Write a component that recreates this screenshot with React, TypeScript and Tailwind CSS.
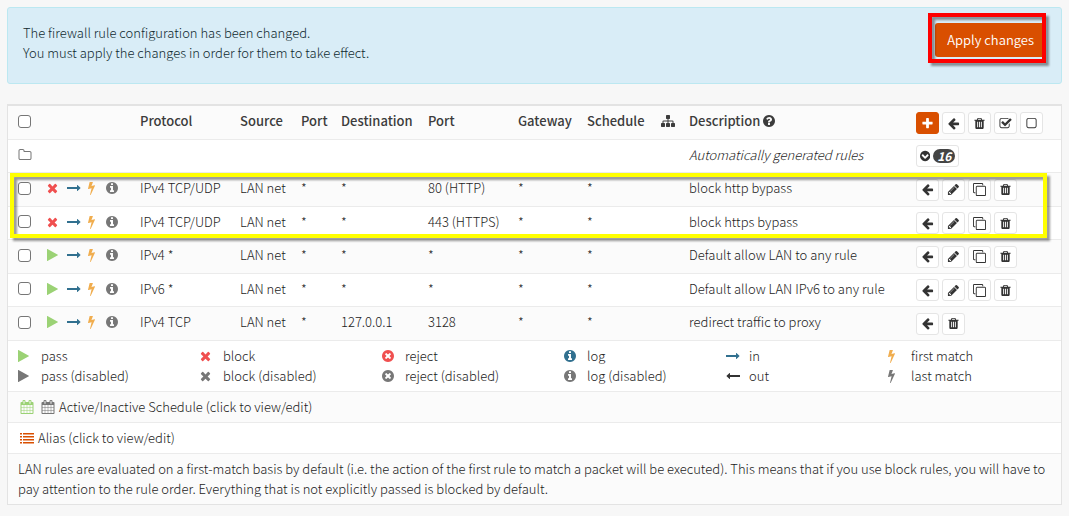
import type { ReactNode } from "react";

const DISC =
  "209-103 385.5t-279.5 279.5-385.5 103-385.5-103-279.5-279.5-103-385.5 103-385.5 279.5-279.5 385.5-103 385.5 103 279.5 279.5 103 385.5z";

const paths = {
  times:
    "M1490 1322q0 40-28 68l-136 136q-28 28-68 28t-68-28l-294-294-294 294q-28 28-68 28t-68-28l-136-136q-28-28-28-68t28-68l294-294-294-294q-28-28-28-68t28-68l136-136q28-28 68-28t68 28l294 294 294-294q28-28 68-28t68 28l136 136q28 28 28 68t-28 68l-294 294 294 294q28 28 28 68z",
  play: "M1576 927l-1328 738q-23 13-39.5 3t-16.5-36v-1472q0-26 16.5-36t39.5 3l1328 738q23 13 23 31t-23 31z",
  right:
    "M1728 893q0 14-10 24l-384 354q-16 14-35 6-19-9-19-29v-224h-1248q-14 0-23-9t-9-23v-192q0-14 9-23t23-9h1248v-224q0-21 19-29t35 5l384 350q10 10 10 23z",
  left: "M1792 800v192q0 14-9 23t-23 9h-1248v224q0 21-19 29t-35-5l-384-350q-10-10-10-23 0-14 10-24l384-354q16-14 35-6 19 9 19 29v224h1248q14 0 23 9t9 23z",
  bolt: "M1333 566q18 20 7 44l-540 1157q-13 25-42 25-4 0-14-2-17-5-25.5-19t-4.5-30l197-808-406 101q-4 1-12 1-18 0-31-11-18-15-13-39l201-825q4-14 16-23t28-9h328q19 0 32 12.5t13 29.5q0 8-5 18l-171 463 396-98q8-2 12-2 19 0 34 15z",
  info:
    "M1152 1376v-160q0-14-9-23t-23-9h-96v-512q0-14-9-23t-23-9h-320q-14 0-23 9t-9 23v160q0 14 9 23t23 9h96v320h-96q-14 0-23 9t-9 23v160q0 14 9 23t23 9h448q14 0 23-9t9-23zm-128-896v-160q0-14-9-23t-23-9h-192q-14 0-23 9t-9 23v160q0 14 9 23t23 9h192q14 0 23-9t9-23zm640 416q0 " +
    DISC,
  question:
    "M1024 1376v-192q0-14-9-23t-23-9h-192q-14 0-23 9t-9 23v192q0 14 9 23t23 9h192q14 0 23-9t9-23zm256-672q0-88-55.5-163t-138.5-116-170-41q-243 0-371 213-15 24 8 42l132 100q7 6 19 6 16 0 25-12 53-68 86-92 34-24 86-24 48 0 85.5 26t37.5 59q0 38-20 61t-68 45q-63 28-115.5 86.5t-52.5 125.5v36q0 14 9 23t23 9h192q14 0 23-9t9-23q0-19 21.5-49.5t54.5-49.5q32-18 49-28.5t46-35 44.5-48 28-60.5 12.5-81zm384 192q0 " +
    DISC,
  reject:
    "M1277 1122q0-26-19-45l-181-181 181-181q19-19 19-45 0-27-19-46l-90-90q-19-19-46-19-26 0-45 19l-181 181-181-181q-19-19-45-19-27 0-46 19l-90 90q-19 19-19 46 0 26 19 45l181 181-181 181q-19 19-19 45 0 27 19 46l90 90q19 19 46 19 26 0 45-19l181-181 181 181q19 19 45 19 27 0 46-19l90-90q19-19 19-46zm387-226q0 " +
    DISC,
  chevron:
    "M941 1299l454-454q19-19 19-45t-19-45l-102-102q-19-19-45-19t-45 19l-307 307-307-307q-19-19-45-19t-45 19l-102 102q-19 19-19 45t19 45l454 454q19 19 45 19t45-19zM1664 896q0 " +
    DISC,
  folder:
    "M1600 1312v-704q0-40-28-68t-68-28h-704q-40 0-68-28t-28-68v-64q0-40-28-68t-68-28h-320q-40 0-68 28t-28 68v960q0 40 28 68t68 28h1216q40 0 68-28t28-68zm128-704v704q0 92-66 158t-158 66h-1216q-92 0-158-66t-66-158v-960q0-92 66-158t158-66h320q92 0 158 66t66 158v32h672q92 0 158 66t66 158z",
  plus: "M1600 736v192q0 40-28 68t-68 28h-416v416q0 40-28 68t-68 28h-192q-40 0-68-28t-28-68v-416h-416q-40 0-68-28t-28-68v-192q0-40 28-68t68-28h416v-416q0-40 28-68t68-28h192q40 0 68 28t28 68v416h416q40 0 68 28t28 68z",
  arrow:
    "M1664 896v128q0 53-32.5 90.5t-84.5 37.5h-704l293 294q38 36 38 90t-38 90l-75 76q-37 37-90 37-52 0-91-37l-651-652q-37-37-37-90 0-52 37-91l651-650q38-38 91-38 52 0 90 38l75 74q38 38 38 91t-38 91l-293 293h704q52 0 84.5 37.5t32.5 90.5z",
  trash:
    "M704 1376v-704q0-14-9-23t-23-9h-64q-14 0-23 9t-9 23v704q0 14 9 23t23 9h64q14 0 23-9t9-23zm256 0v-704q0-14-9-23t-23-9h-64q-14 0-23 9t-9 23v704q0 14 9 23t23 9h64q14 0 23-9t9-23zm256 0v-704q0-14-9-23t-23-9h-64q-14 0-23 9t-9 23v704q0 14 9 23t23 9h64q14 0 23-9t9-23zm-544-992h448l-48-117q-7-9-17-11h-317q-10 2-17 11zm928 32v64q0 14-9 23t-23 9h-96v948q0 83-47 143.5t-113 60.5h-832q-66 0-113-58.5t-47-141.5v-952h-96q-14 0-23-9t-9-23v-64q0-14 9-23t23-9h309l70-167q15-37 54-63t79-26h320q40 0 79 26t54 63l70 167h309q14 0 23 9t9 23z",
  pencil:
    "M491 1536l91-91-235-235-91 91v107h128v128h107zm523-928q0-22-22-22-10 0-17 7l-542 542q-7 7-7 17 0 22 22 22 10 0 17-7l542-542q7-7 7-17zm-54-192l416 416-832 832h-416v-416zm683 96q0 53-37 90l-166 166-416-416 166-165q36-38 90-38 53 0 91 38l235 234q37 39 37 91z",
  clone:
    "M1664 1632v-1088q0-13-9.5-22.5t-22.5-9.5h-1088q-13 0-22.5 9.5t-9.5 22.5v1088q0 13 9.5 22.5t22.5 9.5h1088q13 0 22.5-9.5t9.5-22.5zm128-1088v1088q0 66-47 113t-113 47h-1088q-66 0-113-47t-47-113v-1088q0-66 47-113t113-47h1088q66 0 113 47t47 113zm-384-384v160h-128v-160q0-13-9.5-22.5t-22.5-9.5h-1088q-13 0-22.5 9.5t-9.5 22.5v1088q0 13 9.5 22.5t22.5 9.5h160v128h-160q-66 0-113-47t-47-113v-1088q0-66 47-113t113-47h1088q66 0 113 47t47 113z",
  check:
    "M1472 930v318q0 119-84.5 203.5t-203.5 84.5h-832q-119 0-203.5-84.5t-84.5-203.5v-832q0-119 84.5-203.5t203.5-84.5h832q63 0 117 25 15 7 18 23 3 17-9 29l-49 49q-10 10-23 10-3 0-9-2-23-6-45-6h-832q-66 0-113 47t-47 113v832q0 66 47 113t113 47h832q66 0 113-47t47-113v-254q0-13 9-22l64-64q10-10 23-10 6 0 12 3 20 8 20 29zm231-489l-814 814q-24 24-57 24t-57-24l-430-430q-24-24-24-57t24-57l110-110q24-24 57-24t57 24l263 263 647-647q24-24 57-24t57 24l110 110q24 24 24 57t-24 57z",
  square:
    "M1312 256h-832q-66 0-113 47t-47 113v832q0 66 47 113t113 47h832q66 0 113-47t47-113v-832q0-66-47-113t-113-47zm288 160v832q0 119-84.5 203.5t-203.5 84.5h-832q-119 0-203.5-84.5t-84.5-203.5v-832q0-119 84.5-203.5t203.5-84.5h832q119 0 203.5 84.5t84.5 203.5z",
  sitemap:
    "M1792 1248v320q0 40-28 68t-68 28h-320q-40 0-68-28t-28-68v-320q0-40 28-68t68-28h96v-192h-512v192h96q40 0 68 28t28 68v320q0 40-28 68t-68 28h-320q-40 0-68-28t-28-68v-320q0-40 28-68t68-28h96v-192h-512v192h96q40 0 68 28t28 68v320q0 40-28 68t-68 28h-320q-40 0-68-28t-28-68v-320q0-40 28-68t68-28h96v-192q0-52 38-90t90-38h512v-192h-96q-40 0-68-28t-28-68v-320q0-40 28-68t68-28h320q40 0 68 28t28 68v320q0 40-28 68t-68 28h-96v192h512q52 0 90 38t38 90v192h96q40 0 68 28t28 68z",
  calendar:
    "M192 1664h288v-288h-288v288zm352 0h320v-288h-320v288zm-352-352h288v-320h-288v320zm352 0h320v-320h-320v320zm-352-384h288v-288h-288v288zm736 736h320v-288h-320v288zm-384-736h320v-288h-320v288zm768 736h288v-288h-288v288zm-384-352h320v-320h-320v320zm-352-864v-288q0-13-9.5-22.5t-22.5-9.5h-64q-13 0-22.5 9.5t-9.5 22.5v288q0 13 9.5 22.5t22.5 9.5h64q13 0 22.5-9.5t9.5-22.5zm736 864h288v-320h-288v320zm-384-384h320v-288h-320v288zm384 0h288v-288h-288v288zm32-480v-288q0-13-9.5-22.5t-22.5-9.5h-64q-13 0-22.5 9.5t-9.5 22.5v288q0 13 9.5 22.5t22.5 9.5h64q13 0 22.5-9.5t9.5-22.5zm384-64v1280q0 52-38 90t-90 38h-1408q-52 0-90-38t-38-90v-1280q0-52 38-90t90-38h128v-96q0-66 47-113t113-47h64q66 0 113 47t47 113v96h384v-96q0-66 47-113t113-47h64q66 0 113 47t47 113v96h128q52 0 90 38t38 90z",
  list: "M0 256h256v192h-256zM384 256h1408v192h-1408zM0 640h256v192h-256zM384 640h1408v192h-1408zM0 1024h256v192h-256zM384 1024h1408v192h-1408zM0 1408h256v192h-256zM384 1408h1408v192h-1408z",
};

type IconName = keyof typeof paths;

// Glyphs narrower than the square em are cropped to their own advance width.
const viewBoxes: Partial<Record<IconName, string>> = {
  times: "192 0 1408 1792",
  play: "192 0 1408 1792",
  bolt: "448 0 896 1792",
  info: "128 0 1536 1792",
  reject: "128 0 1536 1792",
  question: "128 0 1536 1792",
  chevron: "128 0 1536 1792",
};

function Icon({ name, className = "h-3.5" }: { name: IconName; className?: string }) {
  return (
    <svg
      viewBox={viewBoxes[name] ?? "0 0 1792 1792"}
      fill="currentColor"
      aria-hidden="true"
      className={`w-auto shrink-0 ${className}`}
    >
      <path d={paths[name]} />
    </svg>
  );
}

function IconButton({ icon, label, primary = false }: { icon: IconName; label: string; primary?: boolean }) {
  const tone = primary ? "border-[#d94f00] bg-[#d94f00] text-white" : "border-[#e5e5e5] bg-white text-[#333]";
  return (
    <button
      type="button"
      aria-label={label}
      className={`flex h-[22px] w-[23px] items-center justify-center rounded-[3px] border ${tone}`}
    >
      <Icon name={icon} className="h-[13px]" />
    </button>
  );
}

function Check({ label }: { label: string }) {
  return (
    <input
      type="checkbox"
      aria-label={label}
      className="block size-[13px] appearance-none rounded-[3px] border border-[#767676] bg-white checked:bg-[#3071a9]"
    />
  );
}

type Rule = {
  pass: boolean;
  protocol: string;
  destination: string;
  port: string;
  description: string;
  editable: boolean;
};

const rules: Rule[] = [
  { pass: false, protocol: "IPv4 TCP/UDP", destination: "*", port: "80 (HTTP)", description: "block http bypass", editable: true },
  { pass: false, protocol: "IPv4 TCP/UDP", destination: "*", port: "443 (HTTPS)", description: "block https bypass", editable: true },
  { pass: true, protocol: "IPv4 *", destination: "*", port: "*", description: "Default allow LAN to any rule", editable: true },
  { pass: true, protocol: "IPv6 *", destination: "*", port: "*", description: "Default allow LAN IPv6 to any rule", editable: true },
  { pass: true, protocol: "IPv4 TCP", destination: "127.0.0.1", port: "3128", description: "redirect traffic to proxy", editable: false },
];

const legend: { icon: IconName; color: string; label: string }[] = [
  { icon: "play", color: "text-[#9bd275]", label: "pass" },
  { icon: "times", color: "text-[#f05050]", label: "block" },
  { icon: "reject", color: "text-[#f05050]", label: "reject" },
  { icon: "info", color: "text-[#31708f]", label: "log" },
  { icon: "right", color: "text-[#31708f]", label: "in" },
  { icon: "bolt", color: "text-[#f0ad4e]", label: "first match" },
  { icon: "play", color: "text-[#777]", label: "pass (disabled)" },
  { icon: "times", color: "text-[#777]", label: "block (disabled)" },
  { icon: "reject", color: "text-[#777]", label: "reject (disabled)" },
  { icon: "info", color: "text-[#777]", label: "log (disabled)" },
  { icon: "left", color: "text-[#333]", label: "out" },
  { icon: "bolt", color: "text-[#777]", label: "last match" },
];

function Th({ children }: { children?: ReactNode }) {
  return <th className="pb-0.5 pl-2.5 text-left font-medium whitespace-nowrap">{children}</th>;
}

function Td({ children }: { children?: ReactNode }) {
  return <td className="pb-0.5 pl-2.5 whitespace-nowrap">{children}</td>;
}

function RuleRow({ rule }: { rule: Rule }) {
  return (
    <tr className="h-[33px] border-t border-[#ebebeb] odd:bg-white even:h-[34px] even:bg-[#fbfbfb]">
      <Td>
        <Check label={`Select ${rule.description}`} />
      </Td>
      <Td>
        <div className="flex items-center">
          <span className="w-5">
            {rule.pass ? (
              <Icon name="play" className="h-3.5 text-[#9bd275]" />
            ) : (
              <Icon name="times" className="h-3.5 text-[#f05050]" />
            )}
          </span>
          <Icon name="right" className="h-3.5 text-[#31708f]" />
          <span className="flex w-[25px] justify-center pr-1">
            <Icon name="bolt" className="h-3.5 text-[#f0ad4e]" />
          </span>
          <Icon name="info" className="h-3.5 text-[#777]" />
        </div>
      </Td>
      <Td>{rule.protocol}</Td>
      <Td>LAN net</Td>
      <Td>*</Td>
      <Td>{rule.destination}</Td>
      <Td>{rule.port}</Td>
      <Td>*</Td>
      <Td>*</Td>
      <Td />
      <Td>{rule.description}</Td>
      <td className="pt-px pl-2.5">
        <div className="flex gap-[3px]">
          <IconButton icon="arrow" label="Move before this rule" />
          {rule.editable && <IconButton icon="pencil" label="Edit" />}
          {rule.editable && <IconButton icon="clone" label="Clone" />}
          <IconButton icon="trash" label="Delete" />
        </div>
      </td>
    </tr>
  );
}

export default function App() {
  return (
    <div className="min-h-screen bg-[#f7f7f7] p-[7px] font-['Noto_Sans_CJK_SC','Noto_Sans',sans-serif] text-[13px] leading-5 font-light text-[#1c1c1c]">
      <div className="relative flex items-start justify-between rounded-[3px] border border-[#bce8f1] bg-[#d9edf7] px-[15px] pt-[15px] pb-5 text-[#102a30]">
        <p>
          The firewall rule configuration has been changed.
          <br />
          You must apply the changes in order for them to take effect.
        </p>
        <button type="button" className="rounded-[3px] bg-[#d94f00] px-3 py-[7px] font-[350] text-white">
          Apply changes
        </button>
        <div className="pointer-events-none absolute top-[5px] right-[15px] h-[50px] w-[118px] border-4 border-[#fe0000] drop-shadow-[3px_3px_1px_rgba(0,0,0,0.4)]" />
      </div>

      <div className="relative mt-5 border border-t-2 border-[#e3e3e3] bg-white">
        <table className="w-full table-fixed border-collapse">
          <colgroup>
            <col className="w-[29px]" />
            <col className="w-[93px]" />
            <col className="w-[100px]" />
            <col className="w-[61px]" />
            <col className="w-10" />
            <col className="w-[87px]" />
            <col className="w-[90px]" />
            <col className="w-[69px]" />
            <col className="w-[74px]" />
            <col className="w-7" />
            <col />
            <col className="w-[155px]" />
          </colgroup>
          <thead>
            <tr className="h-[33px] bg-[#fbfbfb] text-[#3c3c3c]">
              <Th>
                <Check label="Select all rules" />
              </Th>
              <Th />
              <Th>Protocol</Th>
              <Th>Source</Th>
              <Th>Port</Th>
              <Th>Destination</Th>
              <Th>Port</Th>
              <Th>Gateway</Th>
              <Th>Schedule</Th>
              <Th>
                <Icon name="sitemap" />
              </Th>
              <Th>
                <span className="flex items-center gap-[3px]">
                  Description <Icon name="question" />
                </span>
              </Th>
              <th className="pt-0.5 pl-2.5">
                <div className="flex gap-[3px]">
                  <IconButton icon="plus" label="Add rule" primary />
                  <IconButton icon="arrow" label="Move to end" />
                  <IconButton icon="trash" label="Delete selected" />
                  <IconButton icon="check" label="Enable selected" />
                  <IconButton icon="square" label="Disable selected" />
                </div>
              </th>
            </tr>
          </thead>
          <tbody>
            <tr className="h-[33px] border-t border-[#ebebeb] bg-white">
              <Td>
                <Icon name="folder" className="h-3.5 text-[#777]" />
              </Td>
              <td colSpan={9} />
              <td className="pb-0.5 pl-2.5 italic">Automatically generated rules</td>
              <td className="pt-px pl-2.5">
                <button
                  type="button"
                  className="flex h-[22px] items-center gap-[3px] rounded-[3px] border border-[#e5e5e5] bg-white px-[3px] text-[#333]"
                >
                  <Icon name="chevron" className="h-3" />
                  <span className="rounded-full bg-[#444] px-1 text-xs leading-[14px] font-bold text-white italic">
                    16
                  </span>
                </button>
              </td>
            </tr>
            {rules.map((rule) => (
              <RuleRow key={rule.description} rule={rule} />
            ))}
          </tbody>
        </table>

        <ul className="grid grid-cols-[minmax(0,182fr)_minmax(0,182fr)_minmax(0,182fr)_minmax(0,162fr)_minmax(0,162fr)_minmax(0,183fr)] border-t border-[#ebebeb] py-[5px]">
          {legend.map((item) => (
            <li key={item.label} className="flex items-center pl-2.5">
              <span className="w-[23px]">
                <Icon name={item.icon} className={`h-3.5 ${item.color}`} />
              </span>
              {item.label}
            </li>
          ))}
        </ul>
        <div className="flex items-center gap-1 border-t border-[#ebebeb] bg-[#fbfbfb] px-3 py-[5px]">
          <Icon name="calendar" className="mr-[3px] h-3.5 text-[#9bd275]" />
          <Icon name="calendar" className="h-3.5 text-[#777]" />
          Active/Inactive Schedule (click to view/edit)
        </div>
        <div className="flex items-center gap-1 border-t border-[#ebebeb] px-3 py-[5px]">
          <Icon name="list" className="h-3.5 text-[#d94f00]" />
          Alias (click to view/edit)
        </div>
        <p className="border-t border-[#ebebeb] bg-[#fbfbfb] py-[5px] pl-2.5">
          LAN rules are evaluated on a first-match basis by default (i.e. the action of the first rule to match a packet
          will be executed). This means that if you use block rules, you will have to pay attention to the rule order.
          Everything that is not explicitly passed is blocked by default.
        </p>
        <div className="pointer-events-none absolute top-[67px] right-3.5 left-0.5 h-[65px] border-4 border-[#ffff00] drop-shadow-[3px_3px_1px_rgba(0,0,0,0.4)]" />
      </div>
    </div>
  );
}
